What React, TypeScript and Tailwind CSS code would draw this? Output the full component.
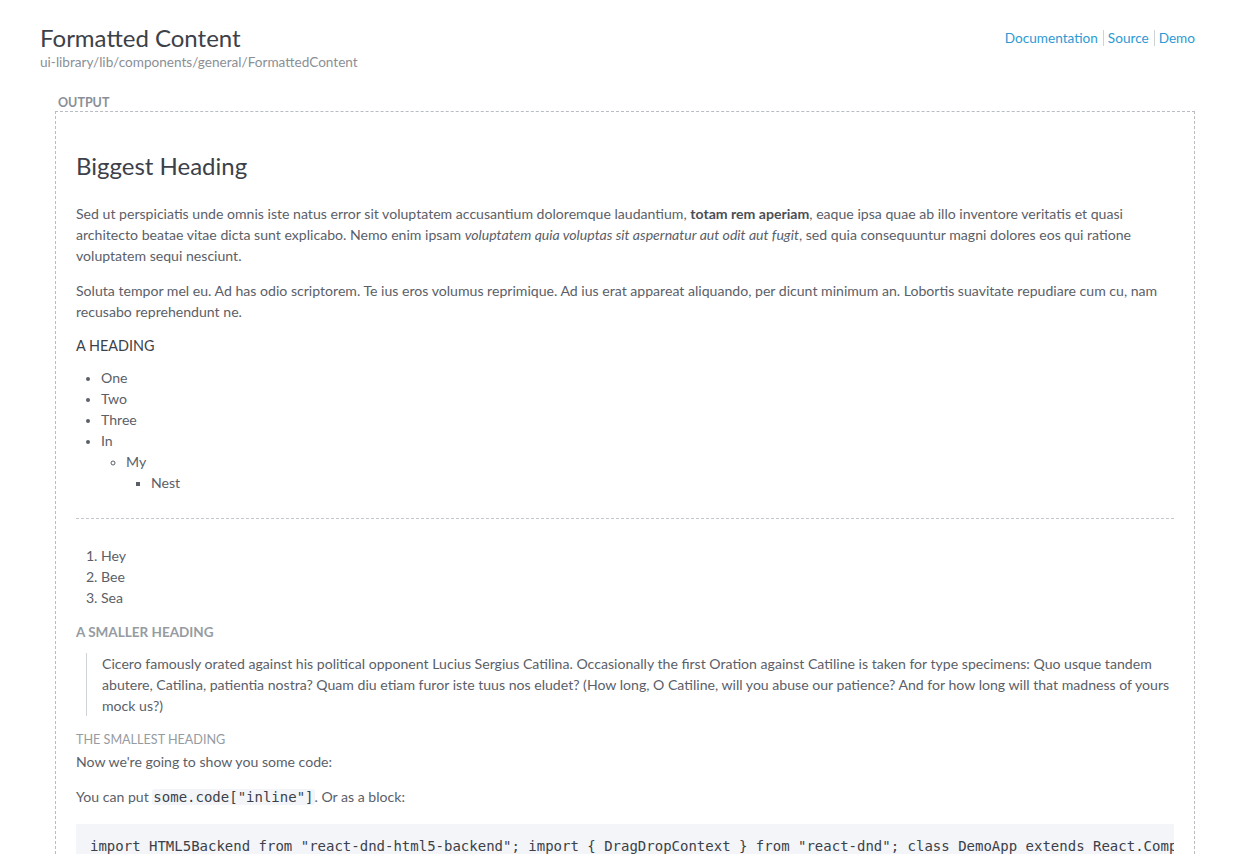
import React from "react";

const LINKS = ["Documentation", "Source", "Demo"];

const CODE =
  'import HTML5Backend from "react-dnd-html5-backend"; import { DragDropContext } from "react-dnd"; class DemoApp extends React.Component { render() { return <div>Hello</div>; } }';

export default function App() {
  return (
    <div
      className="min-h-screen bg-white text-[#5b6068] px-10 pt-[24px]"
      style={{ fontFamily: "Lato, 'Open Sans', sans-serif" }}
    >
      {/* Page header */}
      <div className="flex items-start justify-between">
        <div>
          <h1 className="text-[24px] leading-[28px] text-[#3c4149] font-normal">Formatted Content</h1>
          <div className="text-[13.6px] leading-[18px] text-[#8a8f96] mt-[1px]">
            ui-library/lib/components/general/FormattedContent
          </div>
        </div>
        <div className="flex items-center text-[13.6px] leading-[16px] text-[#2d9ad4] mt-[6px]">
          {LINKS.map((l, i) => (
            <span key={l} className={i > 0 ? "border-l border-[#cfd2d6] pl-[4px] ml-[5px]" : ""}>
              {l}
            </span>
          ))}
        </div>
      </div>

      {/* Output block */}
      <div className="mt-[25px] ml-[18px] text-[12.5px] leading-[14px] font-bold text-[#8a8f96] uppercase">Output</div>
      <div className="ml-[15px] mt-[1px] border border-dashed border-[#b9bdc2] px-5 pt-[39px] text-[14.1px] leading-[21px]">
        <h2 className="text-[24px] leading-[30px] text-[#3c4149]">Biggest Heading</h2>

        <p className="mt-[22px]">
          Sed ut perspiciatis unde omnis iste natus error sit voluptatem accusantium doloremque laudantium,{" "}
          <strong className="font-bold text-[#4a4f57]">totam rem aperiam</strong>, eaque ipsa quae ab illo inventore
          veritatis et quasi architecto beatae vitae dicta sunt explicabo. Nemo enim ipsam{" "}
          <em>voluptatem quia voluptas sit aspernatur aut odit aut fugit</em>, sed quia consequuntur magni dolores eos
          qui ratione voluptatem sequi nesciunt.
        </p>
        <p className="mt-[14px]">
          Soluta tempor mel eu. Ad has odio scriptorem. Te ius eros volumus reprimique. Ad ius erat appareat aliquando,
          per dicunt minimum an. Lobortis suavitate repudiare cum cu, nam recusabo reprehendunt ne.
        </p>

        <h3 className="mt-[13px] text-[14.4px] leading-[21px] text-[#3c4149] uppercase">A Heading</h3>
        <ul className="mt-[11px] list-disc pl-[25px] marker:text-[12px]">
          <li>One</li>
          <li>Two</li>
          <li>Three</li>
          <li>
            In
            <ul className="list-[circle] pl-[25px]">
              <li>
                My
                <ul className="list-[square] pl-[25px]">
                  <li>Nest</li>
                </ul>
              </li>
            </ul>
          </li>
        </ul>

        <hr className="mt-[25px] border-0 border-t border-dashed border-[#c4c8cc]" />

        <ol className="mt-[26px] list-decimal pl-[25px]">
          <li>Hey</li>
          <li>Bee</li>
          <li>Sea</li>
        </ol>

        <h4 className="mt-[15px] text-[13.5px] leading-[18px] font-bold text-[#969ba1] uppercase">A Smaller Heading</h4>
        <blockquote className="mt-[12px] ml-[10px] border-l border-[#cfd2d6] pl-[15px]">
          Cicero famously orated against his political opponent Lucius Sergius Catilina. Occasionally the first Oration
          against Catiline is taken for type specimens: Quo usque tandem abutere, Catilina, patientia nostra? Quam diu
          etiam furor iste tuus nos eludet? (How long, O Catiline, will you abuse our patience? And for how long will that
          madness of yours mock us?)
        </blockquote>

        <h5 className="mt-[15px] text-[12.6px] leading-[18px] text-[#969ba1] uppercase">The Smallest Heading</h5>
        <p className="mt-[2px]">Now we're going to show you some code:</p>
        <p className="mt-[14px]">
          You can put{" "}
          <code
            className="bg-[#f3f5f8] rounded-[3px] px-[1px] text-[14px] text-[#3c4149]"
            style={{ fontFamily: "'DejaVu Sans Mono', monospace" }}
          >
            some.code["inline"]
          </code>
          . Or as a block:
        </p>
        <pre
          className="mt-[16px] bg-[#f3f5f8] px-[14px] py-[12px] text-[14px] leading-[20px] text-[#3c4149] overflow-hidden whitespace-pre"
          style={{ fontFamily: "'DejaVu Sans Mono', monospace" }}
        >
          {CODE}
        </pre>
        <div className="h-5" />
      </div>
    </div>
  );
}
